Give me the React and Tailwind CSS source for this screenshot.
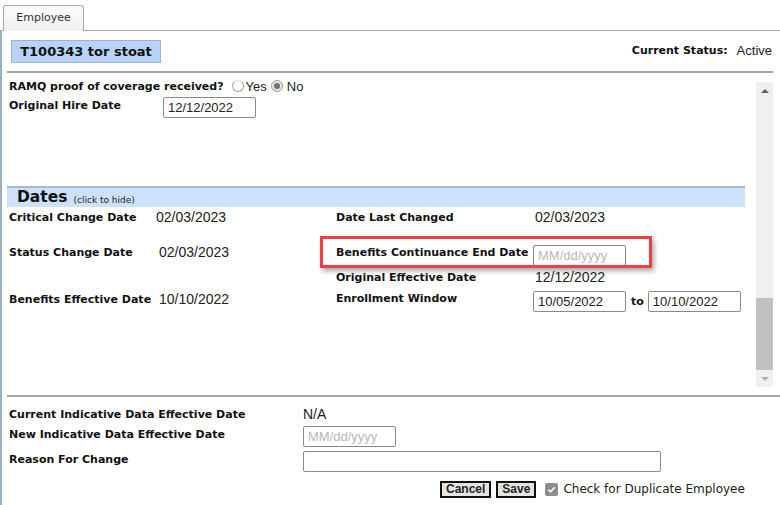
import React from "react";

const V = { fontFamily: '"DejaVu Sans", Verdana, sans-serif' };
const A = { fontFamily: '"Liberation Sans", Arial, sans-serif' };

function Label({ children, className = "" }) {
  return (
    <span className={"block text-[11px] leading-[13px] font-bold text-[#111] whitespace-nowrap " + className} style={V}>
      {children}
    </span>
  );
}

function Val({ children, className = "" }) {
  return (
    <span className={"block text-[14px] leading-[13px] text-[#222] whitespace-nowrap " + className} style={A}>
      {children}
    </span>
  );
}

function Input({ value, placeholder, className = "" }) {
  return (
    <div
      className={"h-[21px] shrink-0 border border-[#8a8a8a] rounded-[2px] bg-white flex items-center px-[4px] text-[13px] " + className}
      style={A}
    >
      {value ? <span className="text-[#222]">{value}</span> : <span className="text-[#b8b8b8]">{placeholder}</span>}
    </div>
  );
}

export default function App() {
  return (
    <div className="w-[780px] h-[505px] bg-white relative overflow-hidden">
      {/* Tab row */}
      <div className="h-[30px] flex items-end pl-[3px]">
        <div
          className="w-[81px] h-[26px] border border-b-0 border-[#a9a9a9] rounded-t-[3px] bg-gradient-to-b from-[#fbfbfb] to-[#f0f0f0] flex items-center justify-center text-[11px] text-[#333] relative top-[1px]"
          style={V}
        >
          Employee
        </div>
      </div>
      {/* Panel */}
      <div className="border-t border-l-2 border-[#9db0c2] h-[475px] flex flex-col">
        {/* header */}
        <div className="h-[40px] flex items-start pt-[9px] pl-[9px] pr-[8px]">
          <div
            className="w-[150px] h-[23px] bg-[#b8d3f7] border border-[#9fb3cc] flex items-center justify-center text-[13px] font-bold text-[#111]"
            style={V}
          >
            T100343 tor stoat
          </div>
          <div className="ml-auto mt-[4px] flex items-center gap-[9px]">
            <Label>Current Status:</Label>
            <span className="text-[13px] leading-[13px] text-[#222]" style={A}>Active</span>
          </div>
        </div>
        <div className="ml-[5px] mr-[7px] h-[2px] bg-[#a6a6a6]"></div>

        {/* scroll area */}
        <div className="h-[322px] flex ml-[5px] mr-[7px]">
          <div className="flex-1 flex flex-col">
            {/* RAMQ row */}
            <div className="h-[14px] mt-[6px] flex items-center pl-[2px]">
              <Label>RAMQ proof of coverage received?</Label>
              <span className="ml-[8px] inline-block w-[12px] h-[12px] rounded-full border border-[#a0a0a0] border-t-[#dcdcdc] bg-white"></span>
              <span className="ml-[2px] text-[13px] leading-[13px] text-[#222]" style={A}>Yes</span>
              <span className="ml-[4px] inline-flex items-center justify-center w-[12px] h-[12px] rounded-full border border-[#9a9a9a] bg-[#e6e6e6]">
                <span className="w-[6px] h-[6px] rounded-full bg-[#707070]"></span>
              </span>
              <span className="ml-[4px] text-[13px] leading-[13px] text-[#222]" style={A}>No</span>
            </div>
            {/* Original hire */}
            <div className="h-[26px] flex items-start pl-[2px]">
              <Label className="mt-[6px] w-[154px]">Original Hire Date</Label>
              <Input value="12/12/2022" className="w-[93px] mt-[4px]" />
            </div>
            <div className="h-[67px] shrink-0"></div>
            {/* Dates band */}
            <div className="w-[738px] h-[21px] shrink-0 bg-[#cde1fb] border-t-2 border-[#a9b9cb] flex items-end pl-[10px]">
              <span className="text-[15.5px] font-bold text-[#111] leading-[19px]" style={V}>Dates</span>
              <span className="ml-[6px] text-[9px] text-[#222] leading-[13px]" style={V}>(click to hide)</span>
            </div>
            {/* rows */}
            <div className="h-[30px] shrink-0 flex items-start pl-[2px]">
              <Label className="mt-[4px] w-[147px]">Critical Change Date</Label>
              <Val className="mt-[4px] w-[180px]">02/03/2023</Val>
              <Label className="mt-[4px] w-[199px]">Date Last Changed</Label>
              <Val className="mt-[4px]">02/03/2023</Val>
            </div>
            <div className="h-[31px] shrink-0 flex items-start pl-[2px]">
              <Label className="mt-[9px] w-[150px]">Status Change Date</Label>
              <Val className="mt-[9px] w-[177px]">02/03/2023</Val>
              <Label className="mt-[9px] w-[197px]">Benefits Continuance End Date</Label>
              <Input placeholder="MM/dd/yyyy" className="w-[93px] mt-[8px]" />
            </div>
            <div className="h-[20px] shrink-0 flex items-start pl-[2px]">
              <span className="w-[327px]"></span>
              <Label className="mt-[3px] w-[199px]">Original Effective Date</Label>
              <Val className="mt-[3px]">12/12/2022</Val>
            </div>
            <div className="h-[30px] shrink-0 flex items-start pl-[2px]">
              <Label className="mt-[5px] w-[150px]">Benefits Effective Date</Label>
              <Val className="mt-[5px] w-[177px]">10/10/2022</Val>
              <Label className="mt-[4px] w-[197px]">Enrollment Window</Label>
              <Input value="10/05/2022" className="w-[93px] mt-[3px]" />
              <Label className="mt-[7px] ml-[5px] mr-[4px]">to</Label>
              <Input value="10/10/2022" className="w-[93px] mt-[3px]" />
            </div>
          </div>
          {/* scrollbar */}
          <div className="w-[17px] mt-[9px] mb-[8px] bg-[#f0f0f0] flex flex-col items-center">
            <div className="h-[17px] flex items-center justify-center">
              <div className="w-0 h-0 border-l-[4px] border-r-[4px] border-b-[4px] border-l-transparent border-r-transparent border-b-[#606060]"></div>
            </div>
            <div className="flex-1 w-full flex flex-col justify-end">
              <div className="h-[72px] w-full bg-[#c1c1c1]"></div>
            </div>
            <div className="h-[17px] flex items-center justify-center">
              <div className="w-0 h-0 border-l-[4px] border-r-[4px] border-t-[4px] border-l-transparent border-r-transparent border-t-[#b0b0b0]"></div>
            </div>
          </div>
        </div>
        <div className="ml-[5px] h-[2px] bg-[#a6a6a6]"></div>

        {/* bottom form */}
        <div className="flex flex-col pl-[7px]">
          <div className="h-[28px] flex items-start">
            <Label className="mt-[11px] w-[294px]">Current Indicative Data Effective Date</Label>
            <Val className="mt-[11px]">N/A</Val>
          </div>
          <div className="h-[25px] flex items-start">
            <Label className="mt-[3px] w-[294px]">New Indicative Data Effective Date</Label>
            <Input placeholder="MM/dd/yyyy" className="w-[93px] mt-[1px]" />
          </div>
          <div className="h-[26px] flex items-start">
            <Label className="mt-[3px] w-[294px]">Reason For Change</Label>
            <Input className="w-[358px] mt-[1px]" />
          </div>
          <div className="flex items-center pl-[431px] mt-[4px]">
            <button className="h-[17px] px-[4px] border-2 border-[#111] bg-[#e4e4e4] text-[12px] font-bold text-[#222] leading-none" style={A}>Cancel</button>
            <button className="ml-[5px] h-[17px] px-[4px] border-2 border-[#111] bg-[#e4e4e4] text-[12px] font-bold text-[#222] leading-none" style={A}>Save</button>
            <span className="ml-[9px] w-[13px] h-[13px] rounded-[2px] bg-[#8d8d8d] flex items-center justify-center">
              <svg width="9" height="9" viewBox="0 0 10 10"><path d="M1.5 5.2 L4 7.5 L8.5 2.5" stroke="#fff" strokeWidth="1.8" fill="none"/></svg>
            </span>
            <span className="ml-[5px] text-[12px] text-[#222]" style={V}>Check for Duplicate Employee</span>
          </div>
        </div>
      </div>

      {/* highlight annotation */}
      <div className="absolute left-[320px] top-[236px] w-[332px] h-[32px] border-[3px] border-[#ee3f47] shadow-[2px_3px_5px_rgba(0,0,0,0.35)]"></div>
    </div>
  );
}
